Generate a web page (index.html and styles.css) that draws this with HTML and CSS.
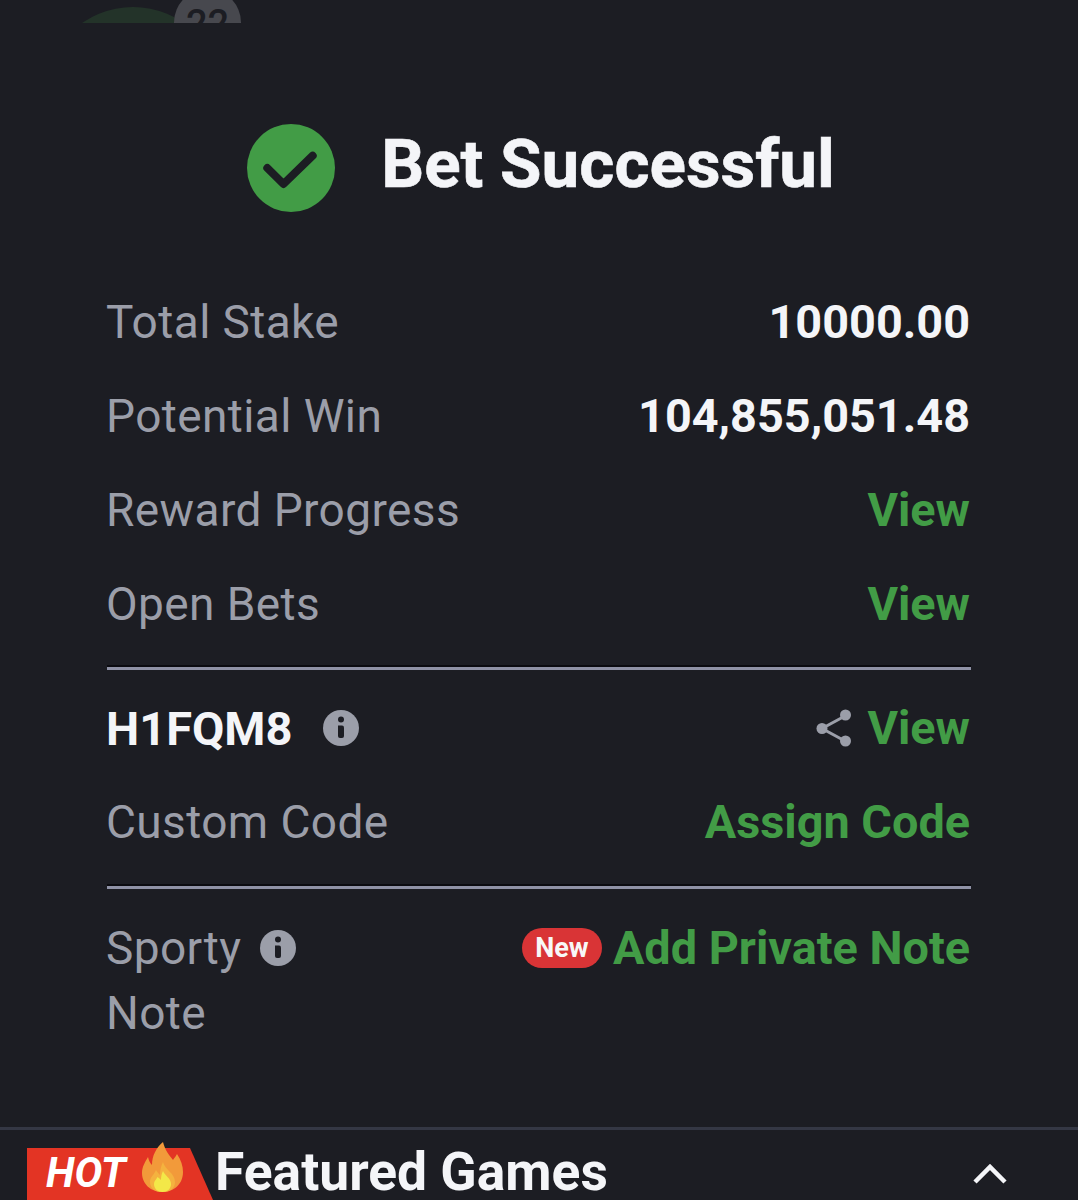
FILE: index.html
```html
<!DOCTYPE html>
<html lang="en">
<head>
<meta charset="utf-8">
<title>Bet Successful</title>
<link rel="stylesheet" href="styles.css">
</head>
<body>
<div class="peek">
  <div class="peek-avatar"></div>
  <div class="peek-count">22</div>
</div>
<main class="panel">
  <header class="title">
    <svg class="check" viewBox="0 0 88 88" aria-hidden="true">
      <circle cx="44" cy="44" r="44" fill="#429c46"/>
      <path d="M20.300 44 L36.500 60 L65.700 31.700" fill="none" stroke="#1c1d23" stroke-width="8" stroke-linecap="round" stroke-linejoin="round"/>
    </svg>
    <h1>Bet Successful</h1>
  </header>
  <section class="group first-group">
    <div class="row"><span class="label">Total Stake</span><span class="value">10000.00</span></div>
    <div class="row"><span class="label">Potential Win</span><span class="value">104,855,051.48</span></div>
    <div class="row"><span class="label">Reward Progress</span><span class="link">View</span></div>
    <div class="row"><span class="label">Open Bets</span><span class="link">View</span></div>
  </section>
  <section class="group ruled code-group">
    <div class="row">
      <span class="code">H1FQM8
        <svg class="info info-code" viewBox="0 0 36 36" aria-hidden="true"><circle cx="18" cy="18" r="18" fill="#9b9ea9"/><circle cx="18" cy="9.500" r="3" fill="#1c1d23"/><path d="M15 15.500 H19 Q21 15.500 21 17.500 V26 Q21 28 19 28 H17 Q15 28 15 26 Z" fill="#1c1d23"/></svg>
      </span>
      <span class="actions">
        <svg class="share" viewBox="0 0 36 38" aria-hidden="true"><path d="M29 7 L6 19.500 L29 32" fill="none" stroke="#9b9ea9" stroke-width="3"/><circle cx="29.500" cy="6" r="5.500" fill="#9b9ea9"/><circle cx="6" cy="19.500" r="5.500" fill="#9b9ea9"/><circle cx="29.500" cy="32" r="5.500" fill="#9b9ea9"/></svg>
        <span class="link">View</span>
      </span>
    </div>
    <div class="row"><span class="label">Custom Code</span><span class="link">Assign Code</span></div>
  </section>
  <section class="group ruled note-group">
    <div class="note-row">
      <div class="label note-label">
        <span class="note-line">Sporty
          <svg class="info info-note" viewBox="0 0 36 36" aria-hidden="true"><circle cx="18" cy="18" r="18" fill="#9b9ea9"/><circle cx="18" cy="9.500" r="3" fill="#1c1d23"/><path d="M15 15.500 H19 Q21 15.500 21 17.500 V26 Q21 28 19 28 H17 Q15 28 15 26 Z" fill="#1c1d23"/></svg>
        </span>
        <span class="note-line">Note</span>
      </div>
      <div class="actions note-actions">
        <span class="badge">New</span>
        <span class="link">Add Private Note</span>
      </div>
    </div>
  </section>
</main>
<footer class="games">
  <div class="hot">
    <em>HOT</em>
    <svg class="flame" viewBox="0 0 41 50" aria-hidden="true">
      <path d="M21 0 C23 8 27 13 31 18 C33 15 34 14 35 12 C39 18 41 24 41 30 C41 42 32 50 20.500 50 C9 50 0 42 0 31 C0 25 3 20 6 15 C7 19 8 21 10 23 C10 14 14 6 21 0 Z" fill="#f29a3a"/>
      <path d="M21 20 C23 28 33 31 33 40 C33 47 27 50 20.500 50 C14 50 8 47 8 40 C8 35 12 33 14 28 C16 31 17 32 18 33 C18 28 19 24 21 20 Z" fill="#f4b23f"/>
      <path d="M21 29 C23 34 29 36 29 42 C29 47 25 50 20.500 50 C16 50 12 47 12 42 C12 39 14 38 15.500 35 C17 36 18 37 19 38 C19 35 19.500 32 21 29 Z" fill="#f3e848"/>
    </svg>
  </div>
  <h2>Featured Games</h2>
  <svg class="chevron" viewBox="0 0 36 22" aria-hidden="true"><path d="M3 19 L18 4 L33 19" fill="none" stroke="#f4f5f8" stroke-width="4.500"/></svg>
</footer>
</body>
</html>
```
FILE: styles.css
```css
* { box-sizing: border-box; }
html, body { margin: 0; padding: 0; }
body {
  width: 1078px;
  height: 1200px;
  overflow: hidden;
  background: #1c1d23;
  color: #f4f5f8;
  font-family: Roboto, "Liberation Sans", sans-serif;
}
.peek {
  position: relative;
  height: 23px;
  overflow: hidden;
  background: #1c1d23;
}
.peek-avatar {
  position: absolute;
  left: 44px;
  top: 7px;
  width: 178px;
  height: 178px;
  border-radius: 50%;
  background: #233329;
}
.peek-count {
  position: absolute;
  left: 174px;
  top: -11px;
  width: 67px;
  height: 67px;
  border-radius: 50%;
  background: #47484e;
  color: #1c1d23;
  font-size: 38px;
  font-weight: 500;
  text-align: center;
  line-height: 71px;
}
.panel { padding: 0 107px; }
.title {
  display: flex;
  align-items: center;
  justify-content: center;
  gap: 46px;
  margin: 101px 0 0 4px;
  height: 88px;
}
.check { width: 88px; height: 88px; flex: none; }
h1 {
  margin: 0 0 8px;
  font-size: 67.400px;
  font-weight: 700;
  line-height: 80px;
  color: #f4f5f8;
  -webkit-text-stroke: 0.6px #f4f5f8;
}
.group { display: flex; flex-direction: column; margin-top: 63px; padding-bottom: 17px; }
.first-group { padding-bottom: 16px; }
.row {
  display: flex;
  align-items: center;
  justify-content: space-between;
  height: 94px;
  margin: 0 1px 0 -1px;
}
.label { color: #9b9ea9; font-size: 46px; letter-spacing: 0.4px; }
.value { font-weight: 700; color: #f4f5f8; font-size: 46.800px; }
.link { font-weight: 700; color: #429c46; font-size: 46.800px; }
.ruled { margin-top: 0; border-top: 3px solid #8f92a6; box-shadow: 0 -2px 0 #0b0b10; }
.code-group { padding-top: 11px; }
.code { display: flex; align-items: center; font-weight: 700; font-size: 47px; color: #f4f5f8; }
.actions { display: flex; align-items: center; }
.info { display: block; width: 36px; height: 36px; flex: none; }
.info-code { margin-left: 31px; }
.share { width: 36px; height: 38px; margin-right: 15px; }
.note-group { padding-top: 26px; }
.note-row { display: flex; justify-content: space-between; align-items: flex-start; margin: 0 1px 0 -1px; }
.note-label { display: flex; flex-direction: column; }
.note-line { display: flex; align-items: center; height: 65px; }
.info-note { margin-left: 19px; }
.note-actions { height: 65px; }
.badge {
  width: 80px;
  height: 40px;
  margin-right: 11px;
  border-radius: 20px;
  background: #d93436;
  color: #f8f8f8;
  font-size: 27px;
  font-weight: 700;
  line-height: 40px;
  text-align: center;
}
.games {
  position: absolute;
  left: 0;
  right: 0;
  top: 1127px;
  height: 73px;
  overflow: hidden;
  display: flex;
  align-items: flex-start;
  border-top: 3px solid #343744;
  padding-left: 27px;
}
.hot {
  position: relative;
  width: 186px;
  height: 52px;
  margin-top: 18px;
  padding-left: 19px;
  display: flex;
  align-items: flex-start;
}
.hot::before {
  content: "";
  position: absolute;
  left: 0;
  top: 0;
  width: 186px;
  height: 70px;
  background: #e33424;
  clip-path: polygon(0 0, 163px 0, 186px 52px, 186px 70px, 0 70px);
}
.hot em {
  position: relative;
  font-size: 41.500px;
  font-weight: 700;
  line-height: 50px;
  color: #fff;
  font-style: italic;
}
.flame {
  position: absolute;
  left: 115px;
  top: -6px;
  width: 41px;
  height: 50px;
}
h2 {
  margin: 15px 0 0 2px;
  font-size: 53.400px;
  font-weight: 700;
  line-height: 54px;
  color: #f4f5f8;
}
.chevron { position: absolute; left: 972px; top: 33px; width: 36px; height: 22px; }
```
